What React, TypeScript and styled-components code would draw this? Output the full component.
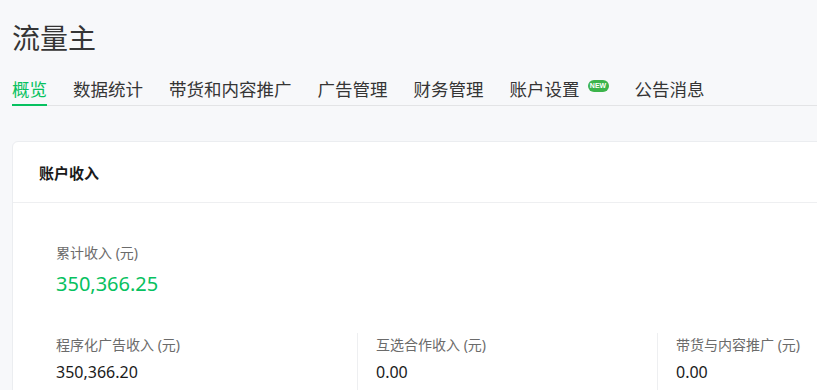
import styled, { createGlobalStyle } from "styled-components";

const GlobalStyle = createGlobalStyle`
  html, body {
    margin: 0;
    padding: 0;
    background: #f7f8fa;
    font-family: "Noto Sans", "Noto Sans CJK SC", sans-serif;
    color: #353535;
  }
`;

const tabs = [
  { label: "概览", active: true },
  { label: "数据统计" },
  { label: "带货和内容推广" },
  { label: "广告管理" },
  { label: "财务管理" },
  { label: "账户设置", badge: "NEW" },
  { label: "公告消息" },
];

const stats = [
  { label: "程序化广告收入 (元)", value: "350,366.20" },
  { label: "互选合作收入 (元)", value: "0.00" },
  { label: "带货与内容推广 (元)", value: "0.00" },
];

export default function App() {
  return (
    <>
      <GlobalStyle />
      <Page>
        <Title>流量主</Title>
        <Nav>
          {tabs.map((t) => (
            <Tab key={t.label} $active={!!t.active}>
              {t.label}
              {t.badge && <Badge>{t.badge}</Badge>}
            </Tab>
          ))}
        </Nav>
        <Card>
          <CardHeader>账户收入</CardHeader>
          <CardBody>
            <Label>累计收入 (元)</Label>
            <Total>350,366.25</Total>
            <StatRow>
              {stats.map((s, i) => (
                <Stat key={s.label} $first={i === 0}>
                  <Label>{s.label}</Label>
                  <Value>{s.value}</Value>
                </Stat>
              ))}
            </StatRow>
          </CardBody>
        </Card>
      </Page>
    </>
  );
}

const Page = styled.div`
  padding: 20px 0 0 12px;
  overflow: hidden;
  height: 370px;
`;

const Title = styled.h1`
  margin: 0;
  font-size: 28px;
  line-height: 36px;
  font-weight: 400;
  color: #353535;
`;

const Nav = styled.nav`
  display: flex;
  gap: 26px;
  margin-top: 21px;
  border-bottom: 1px solid #e3e4e6;
`;

const Tab = styled.div<{ $active: boolean }>`
  display: flex;
  align-items: flex-start;
  font-size: 17.5px;
  line-height: 24px;
  padding-bottom: 3px;
  margin-bottom: -1px;
  white-space: nowrap;
  color: ${(p) => (p.$active ? "#07c160" : "#353535")};
  border-bottom: 2px solid ${(p) => (p.$active ? "#07c160" : "transparent")};
`;

const Badge = styled.span`
  margin: 3px 0 0 8px;
  width: 21px;
  height: 12px;
  border-radius: 6px;
  background: #3cb44b;
  color: #fff;
  text-align: center;
  font-size: 7px;
  line-height: 12px;
  font-weight: 700;
  font-family: "Liberation Sans", sans-serif;
`;

const Card = styled.section`
  margin-top: 35px;
  width: 830px;
  background: #fff;
  border: 1px solid #ebedf0;
  border-radius: 6px;
`;

const CardHeader = styled.div`
  height: 60px;
  display: flex;
  align-items: center;
  padding-left: 26px;
  font-size: 15px;
  font-weight: 700;
  color: #1a1a1a;
  border-bottom: 1px solid #eeeff1;
`;

const CardBody = styled.div`
  padding: 41px 0 0 43px;
`;

const Label = styled.div`
  font-size: 14px;
  line-height: 18px;
  color: #6b6b6b;
`;

const Total = styled.div`
  margin-top: 8px;
  font-size: 20px;
  line-height: 28px;
  color: #07c160;
`;

const StatRow = styled.div`
  display: grid;
  grid-template-columns: 301px 300px 300px;
  margin-top: 35px;
`;

const Stat = styled.div<{ $first: boolean }>`
  padding: 3px 0 0 ${(p) => (p.$first ? "0" : "18px")};
  height: 60px;
  border-left: ${(p) => (p.$first ? "none" : "1px solid #eeeff1")};
`;

const Value = styled.div`
  margin-top: 7px;
  font-size: 16px;
  line-height: 22px;
  color: #1a1a1a;
`;
